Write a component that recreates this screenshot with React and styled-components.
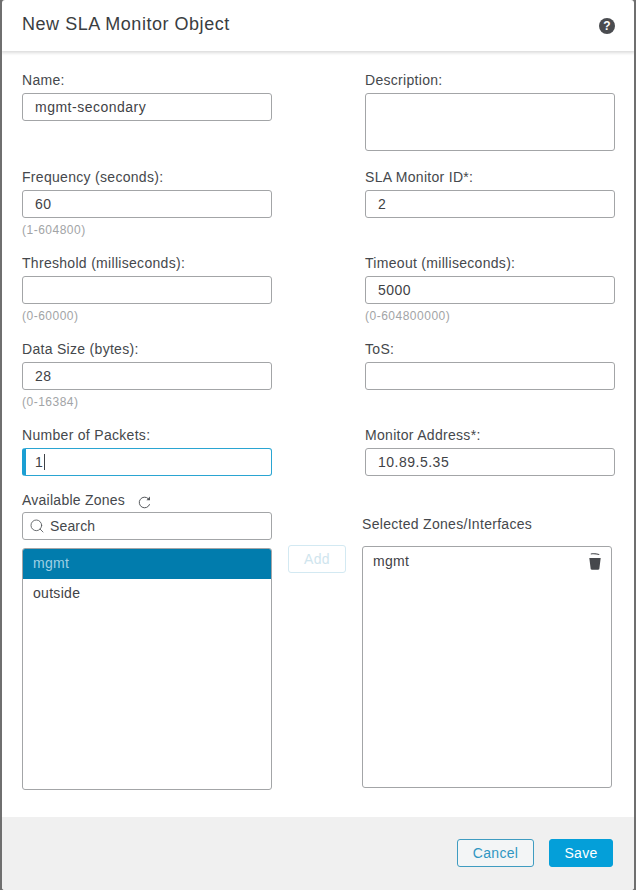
import React from "react";
import styled, { createGlobalStyle } from "styled-components";
import { Search } from "lucide-react";

const Global = createGlobalStyle`
  html, body { margin: 0; padding: 0; background: #6f6f6f; }
  body { font-family: "Liberation Sans", Arial, sans-serif; color: #3f4246; }
  * { box-sizing: border-box; }
`;

const Dialog = styled.div`
  width: 632px;
  height: 890px;
  margin-left: 2px;
  background: #fff;
  border-radius: 3px;
  display: flex;
  flex-direction: column;
  overflow: hidden;
`;

const Header = styled.header`
  height: 51px;
  flex: none;
  display: flex;
  align-items: center;
  justify-content: space-between;
  padding: 0 19px 3px 20px;
  box-shadow: 0 1px 3px 1px rgba(0, 0, 0, 0.14);
`;

const Title = styled.h1`
  margin: 0;
  font-size: 18px;
  font-weight: 400;
  letter-spacing: 0.53px;
  color: #3a3d41;
`;

const Help = styled.div`
  width: 16px;
  height: 16px;
  margin-top: 3px;
  border-radius: 50%;
  background: #4a4c50;
  color: #fff;
  font-size: 12px;
  font-weight: 700;
  line-height: 16px;
  text-align: center;
`;

const Body = styled.main`
  flex: 1;
  padding: 19px 0 0 20px;
`;

const Row = styled.div`
  display: grid;
  grid-template-columns: 250px 250px;
  column-gap: 93px;
  height: ${(p) => p.$height}px;
`;

const Label = styled.label`
  display: block;
  height: 20px;
  margin-bottom: ${(p) => p.$gap ?? 3}px;
  font-size: 14px;
  line-height: 20px;
  letter-spacing: 0.3px;
  color: #45484c;
`;

const Input = styled.input`
  display: block;
  width: 250px;
  height: 28px;
  padding: 0 12px;
  border: 1px solid #a3a5a7;
  border-radius: 3px;
  background: #fff;
  font: 14px "Liberation Sans", Arial, sans-serif;
  letter-spacing: 0.5px;
  color: #3f4246;
  outline: none;
`;

const TextArea = styled.textarea`
  display: block;
  width: 250px;
  height: 58px;
  border: 1px solid #a3a5a7;
  border-radius: 3px;
  background: #fff;
  resize: none;
  outline: none;
`;

const FocusedInput = styled.div`
  width: 250px;
  height: 28px;
  display: flex;
  align-items: center;
  padding-left: 9px;
  border: 1px solid #2aa5d2;
  border-left: 4px solid #1b9fd3;
  border-radius: 3px;
  font-size: 14px;
  color: #3f4246;
`;

const Caret = styled.span`
  width: 1px;
  height: 16px;
  margin-left: 1px;
  background: #3f4246;
`;

const Hint = styled.div`
  margin-top: 4px;
  font-size: 12px;
  line-height: 16px;
  letter-spacing: 0.5px;
  color: #a2a4a6;
`;

const Zones = styled.div`
  display: grid;
  grid-template-columns: 250px 58px 250px;
  column-gap: 16px;
`;

const ZoneLabelRow = styled.div`
  display: flex;
  align-items: center;
  gap: 13px;
  height: 20px;
  margin-bottom: 2px;
  font-size: 14px;
  letter-spacing: 0.25px;
  color: #45484c;

  svg {
    margin-top: 4px;
  }
`;

const SearchBox = styled.div`
  height: 28px;
  display: flex;
  align-items: center;
  gap: 5px;
  padding-left: 6px;
  border: 1px solid #a3a5a7;
  border-radius: 3px;
  font-size: 14px;
  letter-spacing: 0.15px;
  color: #45484c;
`;

const ListBox = styled.div`
  height: ${(p) => p.$height}px;
  margin-top: ${(p) => p.$top}px;
  border: 1px solid #a3a5a7;
  border-radius: 3px;
  overflow: hidden;
`;

const ListItem = styled.div`
  height: 30px;
  padding-left: 10px;
  font-size: 14px;
  line-height: 29px;
  letter-spacing: 0.3px;
  background: ${(p) => (p.$selected ? "#017cad" : "transparent")};
  color: ${(p) => (p.$selected ? "#9fd0e4" : "#3f4246")};
`;

const AddColumn = styled.div`
  padding-top: 55px;
`;

const AddButton = styled.button`
  width: 58px;
  height: 28px;
  padding: 0;
  border: 1px solid #d3e9f2;
  border-radius: 3px;
  background: #fff;
  font: 14px "Liberation Sans", Arial, sans-serif;
  letter-spacing: 0.3px;
  color: #cfe5ee;
`;

const SelectedColumn = styled.div`
  padding-top: 24px;
`;

const SelectedItem = styled.div`
  display: flex;
  align-items: center;
  justify-content: space-between;
  height: 28px;
  padding: 0 10px 0 10px;
  font-size: 14px;
  letter-spacing: 0.3px;
  color: #3f4246;
`;

const Footer = styled.footer`
  height: 73px;
  flex: none;
  display: flex;
  justify-content: flex-end;
  gap: 15px;
  padding: 22px 21px 0 0;
  background: #f0f0f0;
`;

const FooterButton = styled.button`
  width: ${(p) => p.$width}px;
  height: 28px;
  padding: 0;
  border: 1px solid ${(p) => (p.$primary ? "#049fd9" : "#3f9cc1")};
  border-radius: 3px;
  background: ${(p) => (p.$primary ? "#049fd9" : "#f3f5f6")};
  color: ${(p) => (p.$primary ? "#fff" : "#2f96c2")};
  font: 14px "Liberation Sans", Arial, sans-serif;
  letter-spacing: 0.3px;
`;

const Trash = () => (
  <svg width="12" height="17" viewBox="0 0 12 17" fill="#46484c" aria-hidden="true">
    <path d="M1.8 .6 C4.5 .1 8 .3 10.4 1.3 L10.2 2 C7.8 1.2 4.5 1 1.8 1.4 Z" />
    <path d="M.3 5 H11.7 L10.4 15.5 C10.3 16.3 9.8 16.7 9.1 16.7 H2.9 C2.2 16.7 1.7 16.3 1.6 15.5 Z" />
  </svg>
);

const Refresh = () => (
  <svg width="13" height="14" viewBox="0 0 13 14" fill="none" aria-hidden="true">
    <path d="M10.4 3.8 A5.3 5.3 0 1 0 11.6 9.2" stroke="#55585c" strokeWidth="1" />
    <path d="M12 1.6 V5.2 H8.4 Z" fill="#55585c" />
  </svg>
);

const Field = ({ label, value, hint }) => (
  <div>
    <Label>{label}</Label>
    <Input readOnly value={value ?? ""} />
    {hint && <Hint>{hint}</Hint>}
  </div>
);

export default function App() {
  return (
    <Dialog>
      <Global />
      <Header>
        <Title>New SLA Monitor Object</Title>
        <Help>?</Help>
      </Header>
      <Body>
        <Row $height={97}>
          <Field label="Name:" value="mgmt-secondary" />
          <div>
            <Label>Description:</Label>
            <TextArea readOnly />
          </div>
        </Row>
        <Row $height={86}>
          <Field label="Frequency (seconds):" value="60" hint="(1-604800)" />
          <Field label="SLA Monitor ID*:" value="2" />
        </Row>
        <Row $height={86}>
          <Field label="Threshold (milliseconds):" hint="(0-60000)" />
          <Field label="Timeout (milliseconds):" value="5000" hint="(0-604800000)" />
        </Row>
        <Row $height={86}>
          <Field label="Data Size (bytes):" value="28" hint="(0-16384)" />
          <Field label="ToS:" />
        </Row>
        <Row $height={65}>
          <div>
            <Label>Number of Packets:</Label>
            <FocusedInput>
              1<Caret />
            </FocusedInput>
          </div>
          <Field label="Monitor Address*:" value="10.89.5.35" />
        </Row>
        <Zones>
          <div>
            <ZoneLabelRow>
              Available Zones
              <Refresh />
            </ZoneLabelRow>
            <SearchBox>
              <Search size={16} strokeWidth={1.3} color="#55585c" />
              Search
            </SearchBox>
            <ListBox $height={242} $top={8}>
              <ListItem $selected>mgmt</ListItem>
              <ListItem>outside</ListItem>
            </ListBox>
          </div>
          <AddColumn>
            <AddButton>Add</AddButton>
          </AddColumn>
          <SelectedColumn>
            <Label $gap={12}>Selected Zones/Interfaces</Label>
            <ListBox $height={242} $top={0}>
              <SelectedItem>
                mgmt
                <Trash />
              </SelectedItem>
            </ListBox>
          </SelectedColumn>
        </Zones>
      </Body>
      <Footer>
        <FooterButton $width={77}>Cancel</FooterButton>
        <FooterButton $width={64} $primary>Save</FooterButton>
      </Footer>
    </Dialog>
  );
}
